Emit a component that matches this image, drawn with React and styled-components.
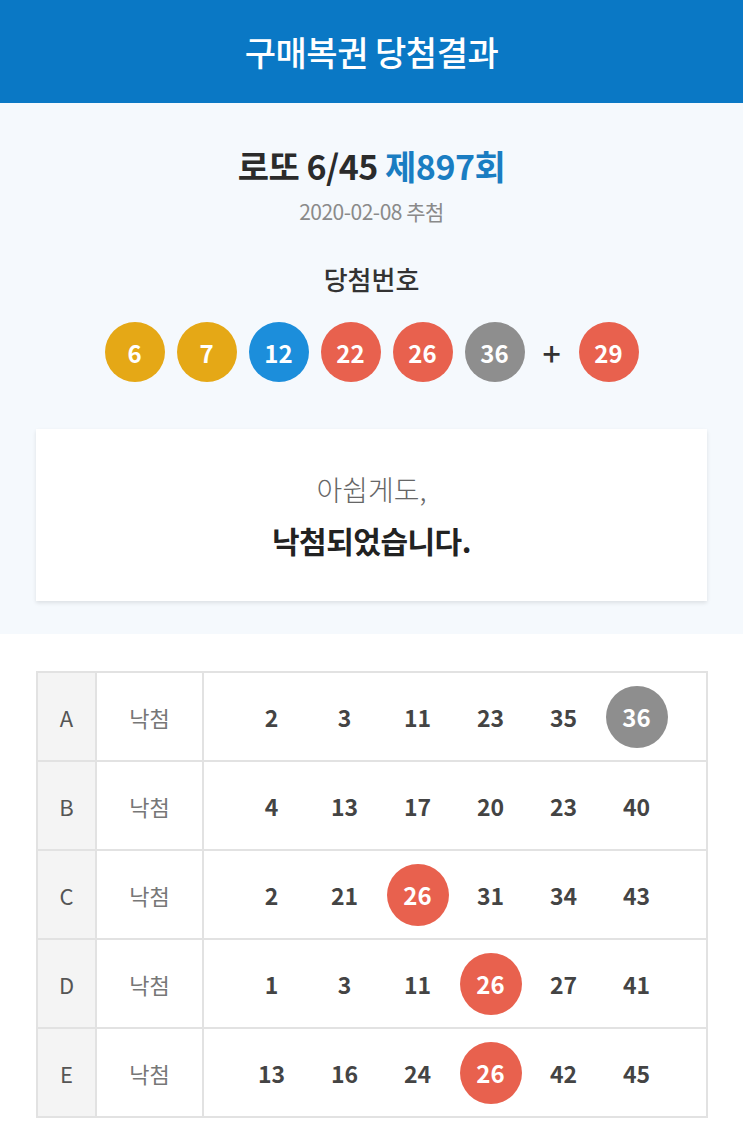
import React from "react";
import styled, { createGlobalStyle } from "styled-components";

const GlobalStyle = createGlobalStyle`
  html, body {
    margin: 0;
    padding: 0;
    background: #ffffff;
    font-family: "Noto Sans CJK KR", "Noto Sans", sans-serif;
  }
`;

const BALL_COLORS = {
  yellow: "#e5a816",
  blue: "#1c8edb",
  red: "#e8614e",
  grey: "#8e8e8e",
};

const ballColor = (n) => {
  if (n <= 10) return BALL_COLORS.yellow;
  if (n <= 20) return BALL_COLORS.blue;
  if (n <= 30) return BALL_COLORS.red;
  if (n <= 40) return BALL_COLORS.grey;
  return "#7fba3d";
};

const Page = styled.div`
  width: 743px;
  min-height: 1130px;
  background: #fff;
`;

const Header = styled.header`
  height: 103px;
  background: #0a78c5;
  display: flex;
  align-items: center;
  justify-content: center;
  color: #fff;
  font-size: 34px;
  font-weight: 500;
  letter-spacing: -0.5px;
`;

const Summary = styled.section`
  background: #f5f9fd;
  padding: 38px 36px 33px;
  display: flex;
  flex-direction: column;
  align-items: center;
`;

const Title = styled.h1`
  margin: 0;
  font-size: 34px;
  font-weight: 700;
  color: #2b2b2b;
  line-height: 50px;
  letter-spacing: -0.5px;
`;

const Round = styled.span`
  color: #1a7dc2;
`;

const DrawDate = styled.p`
  margin: 0;
  font-size: 21px;
  color: #8a8a8a;
  line-height: 40px;
  letter-spacing: -0.5px;
`;

const SubTitle = styled.h2`
  margin: 29px 0 0;
  font-size: 26px;
  font-weight: 500;
  color: #333;
  line-height: 38px;
`;

const BallRow = styled.div`
  display: flex;
  align-items: center;
  gap: 12px;
  margin-top: 24px;
`;

const Ball = styled.span`
  width: ${(p) => p.$size}px;
  height: ${(p) => p.$size}px;
  border-radius: 50%;
  background: ${(p) => p.$color};
  color: #fff;
  font-size: 24px;
  font-weight: 700;
  display: flex;
  align-items: center;
  justify-content: center;
`;

const Plus = styled.span`
  width: 34px;
  text-align: center;
  font-size: 32px;
  font-weight: 500;
  color: #333;
  margin: 0 -2px;
`;

const ResultCard = styled.div`
  align-self: stretch;
  margin-top: 47px;
  height: 172px;
  background: #fff;
  box-shadow: 0 2px 4px rgba(0, 0, 0, 0.1);
  display: flex;
  flex-direction: column;
  align-items: center;
  justify-content: center;
`;

const Sorry = styled.p`
  margin: 0;
  font-size: 28px;
  font-weight: 300;
  color: #666;
  line-height: 40px;
`;

const Verdict = styled.p`
  margin: 10px 0 0;
  font-size: 30px;
  font-weight: 700;
  color: #222;
  line-height: 42px;
  letter-spacing: -0.5px;
`;

const TableWrap = styled.section`
  padding: 37px 35px 14px 36px;
`;

const Table = styled.div`
  border: 2px solid #e2e2e2;
`;

const Row = styled.div`
  display: grid;
  grid-template-columns: 59px 107px 1fr;
  height: 87px;
  & + & {
    border-top: 2px solid #e2e2e2;
  }
`;

const Slot = styled.div`
  background: #f4f4f4;
  border-right: 2px solid #e2e2e2;
  display: flex;
  align-items: center;
  justify-content: center;
  font-size: 22px;
  color: #555;
`;

const Status = styled.div`
  border-right: 2px solid #e2e2e2;
  display: flex;
  align-items: center;
  justify-content: center;
  font-size: 22px;
  color: #777;
`;

const Picks = styled.div`
  display: grid;
  grid-template-columns: repeat(6, 73px);
  padding-left: 31px;
  align-items: center;
  justify-items: center;
`;

const Pick = styled.span`
  font-size: 23px;
  font-weight: 700;
  color: #444;
`;

const winning = [6, 7, 12, 22, 26, 36];
const bonus = 29;

const games = [
  { slot: "A", nums: [2, 3, 11, 23, 35, 36] },
  { slot: "B", nums: [4, 13, 17, 20, 23, 40] },
  { slot: "C", nums: [2, 21, 26, 31, 34, 43] },
  { slot: "D", nums: [1, 3, 11, 26, 27, 41] },
  { slot: "E", nums: [13, 16, 24, 26, 42, 45] },
];

const App = () => {
  return (
    <Page>
      <GlobalStyle />
      <Header>구매복권 당첨결과</Header>
      <Summary>
        <Title>
          로또 6/45 <Round>제897회</Round>
        </Title>
        <DrawDate>2020-02-08 추첨</DrawDate>
        <SubTitle>당첨번호</SubTitle>
        <BallRow>
          {winning.map((n) => (
            <Ball key={n} $size={60} $color={ballColor(n)}>
              {n}
            </Ball>
          ))}
          <Plus>+</Plus>
          <Ball $size={60} $color={ballColor(bonus)}>
            {bonus}
          </Ball>
        </BallRow>
        <ResultCard>
          <Sorry>아쉽게도,</Sorry>
          <Verdict>낙첨되었습니다.</Verdict>
        </ResultCard>
      </Summary>
      <TableWrap>
        <Table>
          {games.map((g) => (
            <Row key={g.slot}>
              <Slot>{g.slot}</Slot>
              <Status>낙첨</Status>
              <Picks>
                {g.nums.map((n, i) =>
                  winning.includes(n) ? (
                    <Ball key={i} $size={62} $color={ballColor(n)}>
                      {n}
                    </Ball>
                  ) : (
                    <Pick key={i}>{n}</Pick>
                  )
                )}
              </Picks>
            </Row>
          ))}
        </Table>
      </TableWrap>
    </Page>
  );
};

export default App;
